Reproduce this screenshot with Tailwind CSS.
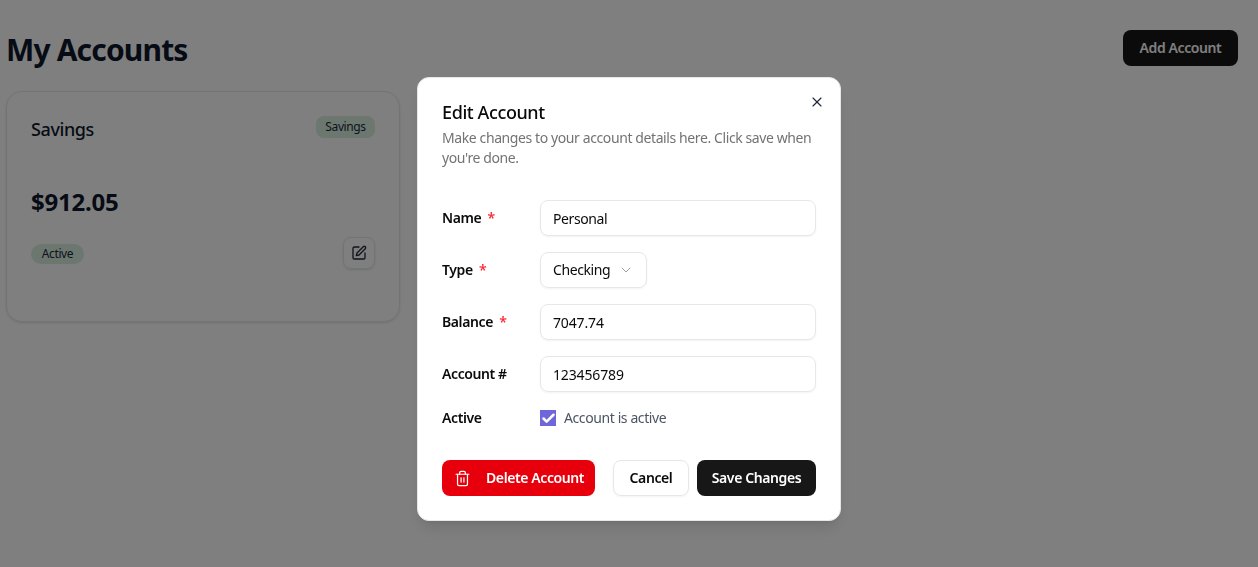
<!DOCTYPE html>
<html lang="en">
<head>
  <meta charset="UTF-8" />
  <meta name="viewport" content="width=device-width, initial-scale=1.0"/>
  <title>My Accounts</title>
  <script src="https://cdn.jsdelivr.net/npm/@tailwindcss/browser@4"></script>
</head>
<body class="bg-white h-[567px] overflow-hidden font-['Noto_Sans',sans-serif] tracking-[-0.025em]">
  <main class="px-[6px] pt-[30px]">
    <div class="flex items-start justify-between pr-[14px] mb-[25px]">
      <h1 class="text-3xl font-bold text-slate-900 mt-[2px] -mb-[2px] tracking-[-0.028em]">My Accounts</h1>
      <button class="h-9 w-[115px] rounded-lg bg-neutral-900 text-white text-sm font-semibold">Add Account</button>
    </div>
    <div class="grid grid-cols-3 gap-8">
      <div class="h-[231px] rounded-2xl border border-gray-200 shadow-sm px-6 pt-6">
        <div class="flex justify-between items-start">
          <h2 class="text-lg font-medium text-slate-900 -mt-[1px]">Savings</h2>
          <span class="h-[22px] w-[59px] text-center rounded-lg bg-[#d8efe0] text-xs leading-[22px] text-slate-800">Savings</span>
        </div>
        <p class="text-2xl font-bold text-slate-900 mt-[43px] tracking-[-0.01em]">$912.05</p>
        <div class="flex items-center justify-between mt-[19px]">
          <span class="h-5 w-[53px] text-center mt-[2px] rounded-full bg-[#d8efe0] text-xs leading-5 text-slate-800">Active</span>
          <button class="size-8 rounded-lg border border-gray-200 shadow-sm flex items-center justify-center">
            <svg class="size-4 text-gray-800" viewBox="0 0 24 24" fill="none" stroke="currentColor" stroke-width="2" stroke-linecap="round" stroke-linejoin="round"><path d="M12 3H5a2 2 0 0 0-2 2v14a2 2 0 0 0 2 2h14a2 2 0 0 0 2-2v-7"/><path d="M18.4 2.6a2.1 2.1 0 1 1 3 3L12 15l-4 1 1-4Z"/></svg>
          </button>
        </div>
      </div>
    </div>
  </main>

  <!-- dialog -->
  <div class="fixed inset-0 bg-black/50"></div>
  <div class="fixed left-[417px] top-[77px] w-[424px] h-[444px] bg-white rounded-xl border border-gray-200 shadow-lg p-6">
    <button class="absolute right-[15px] top-[16px] text-gray-800">
      <svg class="size-4" viewBox="0 0 24 24" fill="none" stroke="currentColor" stroke-width="1.75" stroke-linecap="round" stroke-linejoin="round"><path d="M18 6 6 18"/><path d="m6 6 12 12"/></svg>
    </button>
    <h2 class="text-lg font-medium leading-7 text-neutral-950 -mt-[4px]">Edit Account</h2>
    <p class="text-sm leading-5 text-neutral-500 mt-[2px]">Make changes to your account details here. Click save when you're done.</p>

    <div class="mt-[32px] grid grid-cols-[98px_1fr] gap-y-4 items-center text-sm">
      <label class="font-semibold text-neutral-950">Name <span class="text-red-500 ml-[3px]">*</span></label>
      <input value="Personal" class="h-9 w-full rounded-lg border border-gray-200 shadow-xs px-3 text-neutral-950" />
      <label class="font-semibold text-neutral-950">Type <span class="text-red-500 ml-[3px]">*</span></label>
      <div>
        <button class="h-9 w-[107px] rounded-lg border border-gray-200 shadow-xs px-3 flex items-center justify-between text-neutral-950">
          Checking
          <svg class="size-4 text-gray-400" viewBox="0 0 24 24" fill="none" stroke="currentColor" stroke-width="1.5" stroke-linecap="round" stroke-linejoin="round"><path d="m6 9 6 6 6-6"/></svg>
        </button>
      </div>
      <label class="font-semibold text-neutral-950">Balance <span class="text-red-500 ml-[3px]">*</span></label>
      <input value="7047.74" class="h-9 w-full rounded-lg border border-gray-200 shadow-xs px-3 text-neutral-950 tracking-[-0.01em]" />
      <label class="font-semibold text-neutral-950">Account #</label>
      <input value="123456789" class="h-9 w-full rounded-lg border border-gray-200 shadow-xs px-3 text-neutral-950 tracking-[-0.01em]" />
      <label class="font-semibold text-neutral-950">Active</label>
      <div class="flex items-center gap-2 text-gray-600">
        <span class="size-4 bg-[#6f66d9] flex items-center justify-center">
          <svg class="size-[15px] text-white" viewBox="0 0 24 24" fill="none" stroke="currentColor" stroke-width="4" stroke-linecap="round" stroke-linejoin="round"><path d="M20 6 9 17l-5-5"/></svg>
        </span>
        Account is active
      </div>
    </div>

    <div class="flex items-center mt-[32px] text-sm font-semibold">
      <button class="h-9 w-[153px] rounded-lg bg-[#e7000b] text-white flex items-center pl-3 gap-[15px]">
        <svg class="size-[17px]" viewBox="0 0 24 24" fill="none" stroke="currentColor" stroke-width="1.75" stroke-linecap="round" stroke-linejoin="round"><path d="M3 6h18"/><path d="M19 6v14a2 2 0 0 1-2 2H7a2 2 0 0 1-2-2V6"/><path d="M8 6V4a2 2 0 0 1 2-2h4a2 2 0 0 1 2 2v2"/><path d="M10 11v6"/><path d="M14 11v6"/></svg>
        Delete Account
      </button>
      <button class="h-9 w-[76px] ml-auto rounded-lg border border-gray-200 shadow-xs text-neutral-950">Cancel</button>
      <button class="h-9 w-[119px] ml-2 rounded-lg bg-neutral-900 text-white">Save Changes</button>
    </div>
  </div>
</body>
</html>
